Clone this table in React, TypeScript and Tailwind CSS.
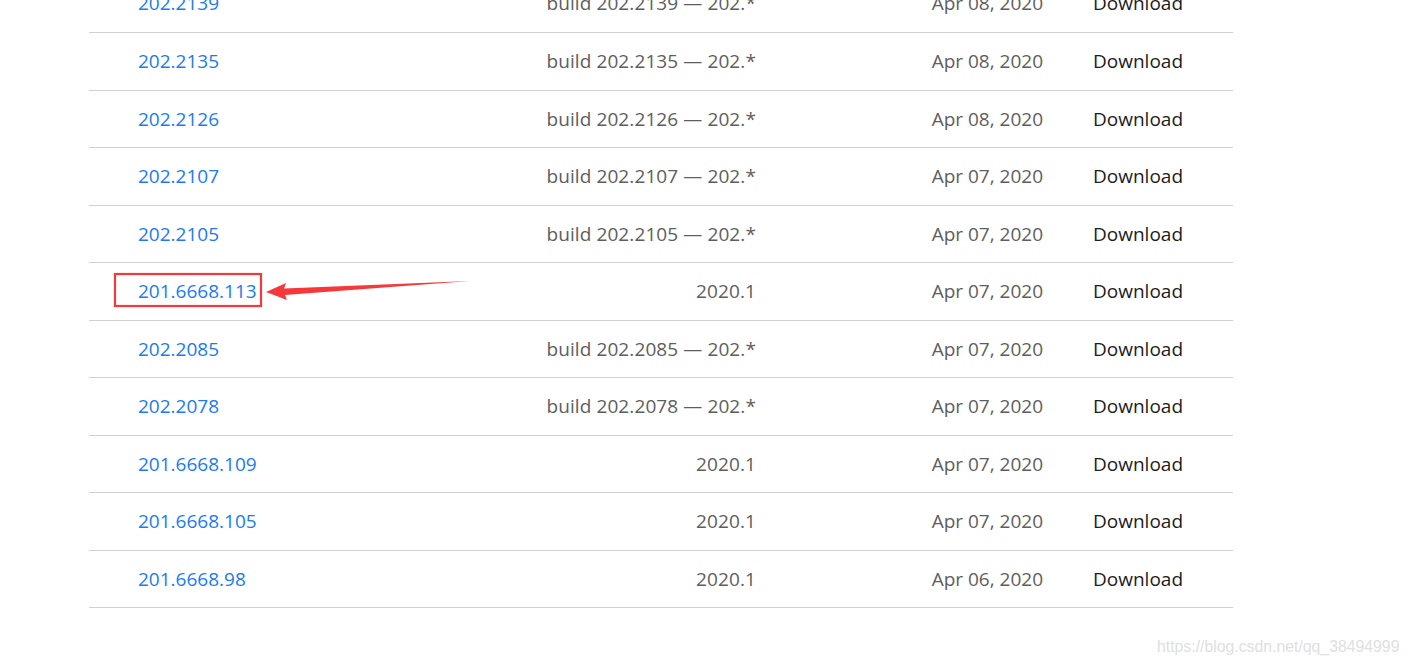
import React from "react";

type Release = {
  version: string;
  build: string;
  date: string;
};

const releases: Release[] = [
  { version: "202.2139", build: "build 202.2139 — 202.*", date: "Apr 08, 2020" },
  { version: "202.2135", build: "build 202.2135 — 202.*", date: "Apr 08, 2020" },
  { version: "202.2126", build: "build 202.2126 — 202.*", date: "Apr 08, 2020" },
  { version: "202.2107", build: "build 202.2107 — 202.*", date: "Apr 07, 2020" },
  { version: "202.2105", build: "build 202.2105 — 202.*", date: "Apr 07, 2020" },
  { version: "201.6668.113", build: "2020.1", date: "Apr 07, 2020" },
  { version: "202.2085", build: "build 202.2085 — 202.*", date: "Apr 07, 2020" },
  { version: "202.2078", build: "build 202.2078 — 202.*", date: "Apr 07, 2020" },
  { version: "201.6668.109", build: "2020.1", date: "Apr 07, 2020" },
  { version: "201.6668.105", build: "2020.1", date: "Apr 07, 2020" },
  { version: "201.6668.98", build: "2020.1", date: "Apr 06, 2020" },
];

// ---------- Annotation overlay (red box + arrow) ----------

const Annotation: React.FC = () => (
  <svg
    className="absolute left-0 top-0 pointer-events-none"
    width={1409}
    height={664}
    viewBox="0 0 1409 664"
  >
    <rect x={115} y={274} width={146} height={32} fill="none" stroke="#f5393b" strokeWidth={2.2} />
    <polygon
      points="266,292 286,283 284,288.5 470,281 285,295 287,300"
      fill="#f5393b"
    />
  </svg>
);

export default function App() {
  return (
    <div
      className="relative w-[1409px] h-[664px] overflow-hidden bg-white"
      style={{ fontFamily: '"Open Sans", "Noto Sans", sans-serif' }}
    >
      <div className="ml-[89px] w-[1144px] -mt-[25px]">
        {releases.map((r, i) => (
          <div
            key={r.version}
            className={
              "grid grid-cols-[300px_417px_237px_1fr] items-center border-b border-[#d0d0d0] text-[19px] " +
              (i === 0 || i % 2 === 1 ? "h-[58px]" : "h-[57px]")
            }
          >
            <div className="pl-[49px] text-[#1a7bf2]">{r.version}</div>
            <div className="pr-[50px] text-right text-[#5e5e5e] tracking-[0.1px]">{r.build}</div>
            <div className="text-right text-[#5e5e5e]">{r.date}</div>
            <div className="pl-[50px] text-[#1c1c1c]">Download</div>
          </div>
        ))}
      </div>

      <Annotation />

      <div
        className="absolute left-[1157px] top-[635px] text-[15.8px] text-[#e0e0e0]"
        style={{ fontFamily: '"Liberation Sans", Arial, sans-serif' }}
      >
        https://blog.csdn.net/qq_38494999
      </div>
    </div>
  );
}
